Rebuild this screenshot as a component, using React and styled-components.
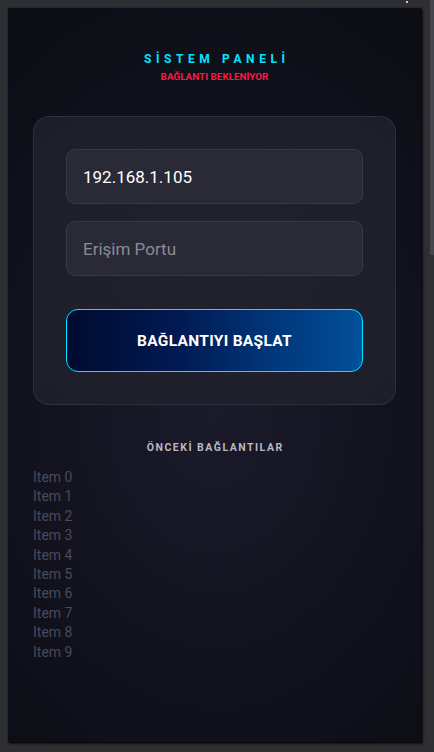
import React from "react";
import styled, { createGlobalStyle } from "styled-components";

const Global = createGlobalStyle`
  html, body { margin: 0; padding: 0; background: #2e2f33; }
  body { font-family: Roboto, "Noto Sans", "Liberation Sans", sans-serif; }
  * { box-sizing: border-box; }
`;

const Desktop = styled.div`
  position: relative;
  width: 434px;
  height: 752px;
  padding: 8px 0 0 8px;
  background: #2e2f33;
  overflow: hidden;
`;

const ScrollThumb = styled.div`
  position: absolute;
  top: 0;
  right: 0;
  width: 4px;
  height: 255px;
  background: #45464b;
`;

const Dot = styled.div`
  position: absolute;
  top: 1px;
  left: 406px;
  width: 2px;
  height: 2px;
  background: #c8c8c8;
`;

const Screen = styled.div`
  width: 413px;
  height: 734px;
  display: flex;
  flex-direction: column;
  align-items: center;
  padding: 43px 25px 0;
  background: radial-gradient(ellipse 80% 60% at 50% 55%, #1a1a2b 0%, #13131f 55%, #0c0d15 100%);
  box-shadow: 1px 1px 0 #0a0a0a, 2px 2px 2px rgba(0, 0, 0, 0.7), 0 0 1px rgba(0,0,0,0.8);
`;

const Title = styled.h1`
  margin: 0;
  font-size: 12px;
  line-height: 16px;
  font-weight: 700;
  letter-spacing: 4.6px;
  padding-left: 4.6px;
  color: #00e5ff;
`;

const Subtitle = styled.div`
  margin-top: 4px;
  font-size: 9.9px;
  line-height: 12px;
  font-weight: 700;
  color: #ff1744;
`;

const Card = styled.div`
  margin-top: 33px;
  width: 363px;
  padding: 32px 32px;
  display: flex;
  flex-direction: column;
  border-radius: 16px;
  background: radial-gradient(ellipse at 50% 50%, #22222f 0%, #1e1e2b 100%);
  border: 1px solid rgba(255, 255, 255, 0.08);
`;

const Field = styled.div`
  height: 55px;
  display: flex;
  align-items: center;
  padding: 1px 16px 0;
  margin-top: ${(p) => (p.$first ? 0 : 17)}px;
  border-radius: 9px;
  background: #2a2a37;
  border: 1px solid #383847;
  font-size: 17px;
  color: ${(p) => (p.$placeholder ? "#8b8b95" : "#ffffff")};
`;

const Button = styled.button`
  margin-top: 33px;
  height: 63px;
  padding-top: 2px;
  border-radius: 12px;
  border: 1px solid #00e5ff;
  background: linear-gradient(90deg, #000a30 0%, #001c55 40%, #003b80 75%, #00509a 100%);
  color: #ffffff;
  font-family: Roboto, "Noto Sans", sans-serif;
  font-size: 15.5px;
  font-weight: 700;
  letter-spacing: 0.3px;
  cursor: pointer;
`;

const SectionLabel = styled.div`
  margin-top: 36px;
  font-size: 10.5px;
  line-height: 14px;
  font-weight: 700;
  letter-spacing: 1.5px;
  padding-left: 1.5px;
  color: #b9b9c1;
`;

const List = styled.ul`
  align-self: stretch;
  list-style: none;
  margin: 13px 0 0;
  padding: 0;
`;

const Item = styled.li`
  font-size: 14px;
  line-height: 19.4px;
  color: #4a4a58;
`;

export default function App() {
  const items = Array.from({ length: 10 }, (_, i) => `Item ${i}`);
  return (
    <>
      <Global />
      <Desktop>
        <Screen>
          <Title>SİSTEM PANELİ</Title>
          <Subtitle>BAĞLANTI BEKLENİYOR</Subtitle>
          <Card>
            <Field $first>192.168.1.105</Field>
            <Field $placeholder>Erişim Portu</Field>
            <Button>BAĞLANTIYI BAŞLAT</Button>
          </Card>
          <SectionLabel>ÖNCEKİ BAĞLANTILAR</SectionLabel>
          <List>
            {items.map((t) => (
              <Item key={t}>{t}</Item>
            ))}
          </List>
        </Screen>
        <ScrollThumb />
        <Dot />
      </Desktop>
    </>
  );
}
